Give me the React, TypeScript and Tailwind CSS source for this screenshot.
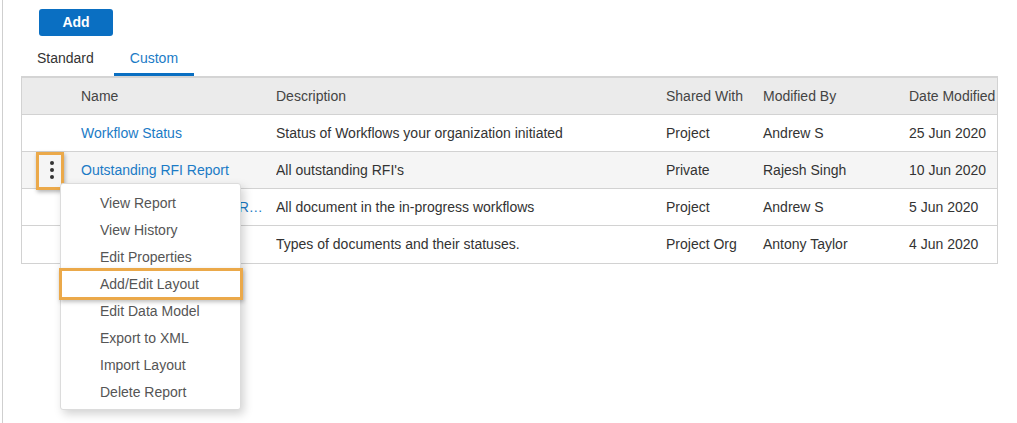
import { useState } from 'react'

const rows = [
  {
    name: 'Workflow Status',
    desc: 'Status of Workflows your organization initiated',
    shared: 'Project',
    by: 'Andrew S',
    date: '25 Jun 2020',
  },
  {
    name: 'Outstanding RFI Report',
    desc: "All outstanding RFI's",
    shared: 'Private',
    by: 'Rajesh Singh',
    date: '10 Jun 2020',
  },
  {
    name: 'Documents in Workflows Report',
    desc: 'All document in the in-progress workflows',
    shared: 'Project',
    by: 'Andrew S',
    date: '5 Jun 2020',
  },
  {
    name: 'Document Status',
    desc: 'Types of documents and their statuses.',
    shared: 'Project Org',
    by: 'Antony Taylor',
    date: '4 Jun 2020',
  },
]

const menuItems = [
  'View Report',
  'View History',
  'Edit Properties',
  'Add/Edit Layout',
  'Edit Data Model',
  'Export to XML',
  'Import Layout',
  'Delete Report',
]

const grid = 'grid grid-cols-[59px_195px_390px_97px_146px_1fr] items-center'

const App = () => {
  const [tab, setTab] = useState('Custom')

  return (
    <div
      className="h-[423px] w-full bg-white ml-[2px] border-l border-[#cfcfcf] text-[14px] text-[#333]"
      style={{ fontFamily: '"Liberation Sans", Arial, sans-serif' }}
    >
      <div className="pl-[18px] pr-[19px]">
        {/* Add button */}
        <div className="pt-[9px] pl-[18px]">
          <button className="h-[27px] w-[74px] rounded-[3px] bg-[#0a6fc2] text-white font-bold text-[14px]">
            Add
          </button>
        </div>

        {/* Tabs */}
        <div className="mt-[8px] flex gap-[4px]">
          {['Standard', 'Custom'].map((t) => (
            <button
              key={t}
              onClick={() => setTab(t)}
              className={
                tab === t
                  ? 'h-[32px] px-[16px] border-b-[3px] border-[#0a6fc2] text-[#1b7bc6]'
                  : 'h-[32px] px-[16px] border-b-[3px] border-transparent text-[#333]'
              }
            >
              {t}
            </button>
          ))}
        </div>

        {/* Table */}
        <div className="relative w-[977px] border-x border-b border-t-2 border-[#d2d2d2] border-t-[#d4d4d4]">
          <div className={`${grid} h-[37px] bg-[#ebebeb] text-[#444] border-b border-[#d2d2d2]`}>
            <div />
            <div>Name</div>
            <div>Description</div>
            <div>Shared With</div>
            <div>Modified By</div>
            <div className="whitespace-nowrap">Date Modified</div>
          </div>
          {rows.map((r, i) => (
            <div
              key={r.name}
              className={`${grid} h-[37px] ${i < rows.length - 1 ? 'border-b border-[#d2d2d2]' : ''} ${
                i === 1 ? 'bg-[#f5f5f5]' : 'bg-white'
              }`}
            >
              <div className="flex justify-center pl-[1px]">
                {i === 1 && (
                  <div className="flex flex-col items-center gap-[3px]">
                    <span className="h-[4px] w-[4px] rounded-full bg-[#333]" />
                    <span className="h-[4px] w-[4px] rounded-full bg-[#333]" />
                    <span className="h-[4px] w-[4px] rounded-full bg-[#333]" />
                  </div>
                )}
              </div>
              <div className="truncate pr-[10px] text-[#1b7bc6]">{r.name}</div>
              <div className="truncate">{r.desc}</div>
              <div className="whitespace-nowrap">{r.shared}</div>
              <div className="whitespace-nowrap">{r.by}</div>
              <div className="whitespace-nowrap">{r.date}</div>
            </div>
          ))}

          {/* Kebab highlight */}
          <div className="absolute left-[14px] top-[74px] h-[38px] w-[28px] border-[3px] border-[#eba94a] shadow-[1px_2px_4px_rgba(0,0,0,0.3)]" />

          {/* Context menu */}
          <div className="absolute left-[38px] top-[105px] w-[181px] rounded-[3px] border border-[#dcdcdc] bg-white pt-[6px] pb-[3px] shadow-[3px_4px_10px_rgba(0,0,0,0.18)] text-[#555]">
            {menuItems.map((m) => (
              <div key={m} className="relative flex h-[27px] items-center pl-[39px]">
                {m === 'Add/Edit Layout' && (
                  <span className="absolute -left-[2px] -right-[3px] -top-[3px] -bottom-[2px] border-[3px] border-[#eba94a] shadow-[1px_2px_4px_rgba(0,0,0,0.25)]" />
                )}
                <span className="relative">{m}</span>
              </div>
            ))}
          </div>
        </div>
      </div>
    </div>
  )
}

export default App
